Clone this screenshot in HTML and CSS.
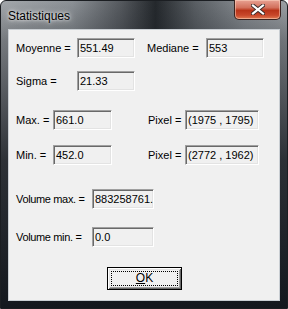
FILE: index.html
```html
<!DOCTYPE html>
<html>
<head>
<meta charset="utf-8">
<link rel="stylesheet" href="styles.css">
</head>
<body>
<div class="window">
  <div class="titlebar">
    <span class="title">Statistiques</span>
    <div class="close">
      <svg width="14" height="11" viewBox="0 0 14 11">
        <path d="M2 1.5 L12 9.5 M12 1.5 L2 9.5" stroke="#3a2a28" stroke-width="4" stroke-linecap="square"/>
        <path d="M2 1.5 L12 9.5 M12 1.5 L2 9.5" stroke="#ffffff" stroke-width="2.2" stroke-linecap="square"/>
      </svg>
    </div>
  </div>
  <div class="client">
    <div class="row r1">
      <span class="lbl w61">Moyenne =</span><span class="field w58">551.49</span>
      <span class="sp12"></span>
      <span class="lbl w59">Mediane =</span><span class="field w58">553</span>
    </div>
    <div class="row r2">
      <span class="lbl w61">Sigma =</span><span class="field w58">21.33</span>
    </div>
    <div class="row r3">
      <span class="lbl w37">Max. =</span><span class="field w59">661.0</span>
      <span class="sp36"></span>
      <span class="lbl w37">Pixel =</span><span class="field w74">(1975 , 1795)</span>
    </div>
    <div class="row r4">
      <span class="lbl w37">Min. =</span><span class="field w59">452.0</span>
      <span class="sp36"></span>
      <span class="lbl w37">Pixel =</span><span class="field w74">(2772 , 1962)</span>
    </div>
    <div class="row r5">
      <span class="lbl w76 tight">Volume max. =</span><span class="field w62">883258761.</span>
    </div>
    <div class="row r6">
      <span class="lbl w76 tight">Volume min. =</span><span class="field w62">0.0</span>
    </div>
    <div class="btnrow">
      <div class="btn"><span class="focus"><u>O</u>K</span></div>
    </div>
  </div>
</div>
</body>
</html>
```

FILE: styles.css
```css
html, body { margin: 0; padding: 0; }
body { width: 288px; height: 309px; overflow: hidden; background: #fff; font-family: "Liberation Sans", Arial, sans-serif; }
.window {
  width: 288px; height: 309px; box-sizing: border-box;
  border: 1px solid #1b1e22;
  border-radius: 6px 6px 0 0;
  background:
    linear-gradient(180deg, rgba(30,34,40,0) 0px, rgba(30,34,40,0.35) 40px, rgba(24,28,34,0.85) 160px, #14181e 100%),
    linear-gradient(90deg, #a4a8ac 0%, #8c9196 25%, #55595e 42%, #24282c 54%, #5a5f64 68%, #878c91 85%, #9da1a5 100%);
  display: flex; flex-direction: column;
  position: relative;
}
.titlebar { height: 28px; position: relative; flex: none; }
.title {
  position: absolute; left: 7px; top: 8px;
  font-size: 12px; color: #000;
  text-shadow: 0 0 6px rgba(255,255,255,0.9), 0 0 3px rgba(255,255,255,0.9);
}
.close {
  position: absolute; left: 233px; top: -1px; width: 45px; height: 19px;
  border: 1px solid #3b2320; border-top: none;
  border-radius: 0 0 5px 5px;
  background: linear-gradient(180deg, #e8a293 0%, #d2705c 40%, #b93419 55%, #c8472a 80%, #e07a52 100%);
  box-shadow: inset 0 0 0 1px rgba(255,220,200,0.5);
  display: flex; align-items: center; justify-content: center;
}
.client {
  margin: 0 7px 7px 7px;
  flex: 1;
  border: 1px solid #c9ced3;
  background: #f0f0f0;
  padding: 8px 0 0 7px;
  box-sizing: border-box;
  font-size: 11px; color: #000;
}
.row { display: flex; align-items: center; height: 20px; }
.r2 { margin-top: 13px; }
.r3 { margin-top: 19px; }
.r4 { margin-top: 15px; }
.r5 { margin-top: 24px; }
.r6 { margin-top: 18px; }
.lbl { flex: none; white-space: nowrap; }
.tight { letter-spacing: -0.35px; }
.w61 { width: 61px; }
.w59 { width: 59px; }
.w37 { width: 37px; }
.w76 { width: 76px; }
.sp12 { width: 12px; flex: none; }
.sp36 { width: 36px; flex: none; }
.field {
  flex: none; height: 20px; box-sizing: border-box;
  border-top: 1px solid #a0a0a0; border-left: 1px solid #a0a0a0;
  border-right: 1px solid #ffffff; border-bottom: 1px solid #ffffff;
  box-shadow: inset 1px 1px 0 #696969, inset -1px -1px 0 #e3e3e3;
  background: #f0f0f0;
  padding: 0 0 0 2px; line-height: 18px;
  overflow: hidden; white-space: nowrap;
}
.w58 { width: 58px; }
.w59 { width: 59px; }
.w74 { width: 74px; }
.w62 { width: 62px; }
.btnrow { display: flex; margin-top: 20px; padding-left: 91px; }
.btn {
  width: 75px; height: 23px; box-sizing: border-box;
  border: 1px solid #000;
  background: #f0f0f0;
  box-shadow: inset 1px 1px 0 #ffffff, inset -1px -1px 0 #696969, inset 2px 2px 0 #e3e3e3, inset -2px -2px 0 #a0a0a0;
  padding: 3px;
  display: flex;
}
.focus {
  flex: 1; border: 1px dotted #000;
  display: flex; align-items: center; justify-content: center;
  font-size: 12px; line-height: 13px;
}
.focus u { text-decoration: underline; text-underline-offset: 1px; }
```
